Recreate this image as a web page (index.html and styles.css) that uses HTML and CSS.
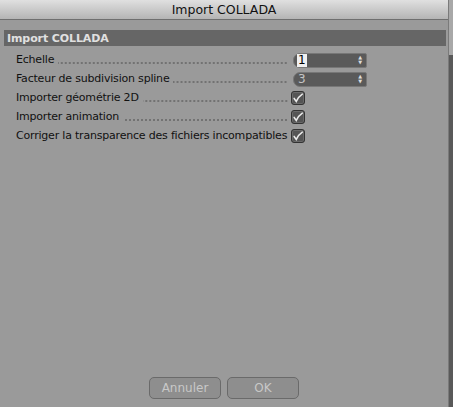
FILE: index.html
```html
<!DOCTYPE html>
<html lang="fr">
<head>
  <meta charset="UTF-8">
  <title>Import COLLADA</title>
  <link rel="stylesheet" href="styles.css">
</head>
<body>

<div class="screen">
  <div class="window">
    <div class="titlebar">Import COLLADA</div>

    <div class="content">
      <div class="group-head">Import COLLADA</div>

      <div class="rows">
        <div class="row">
          <span class="label">Echelle</span>
          <span class="dots"></span>
          <div class="spin"><span class="val sel">1</span><span class="arrows">&#9650;<br>&#9660;</span></div>
        </div>
        <div class="row">
          <span class="label">Facteur de subdivision spline</span>
          <span class="dots"></span>
          <div class="spin"><span class="val">3</span><span class="arrows">&#9650;<br>&#9660;</span></div>
        </div>
        <div class="row">
          <span class="label">Importer géométrie 2D</span>
          <span class="dots"></span>
          <span class="check"><svg viewBox="0 0 14 14" width="12" height="12"><path d="M2.5 7.5 L5 11 Q7.5 5.5 12 2.5" fill="none" stroke="#ececec" stroke-width="1.8" stroke-linecap="round"/></svg></span>
        </div>
        <div class="row">
          <span class="label">Importer animation</span>
          <span class="dots"></span>
          <span class="check"><svg viewBox="0 0 14 14" width="12" height="12"><path d="M2.5 7.5 L5 11 Q7.5 5.5 12 2.5" fill="none" stroke="#ececec" stroke-width="1.8" stroke-linecap="round"/></svg></span>
        </div>
        <div class="row">
          <span class="label">Corriger la transparence des fichiers incompatibles</span>
          <span class="dots none"></span>
          <span class="check"><svg viewBox="0 0 14 14" width="12" height="12"><path d="M2.5 7.5 L5 11 Q7.5 5.5 12 2.5" fill="none" stroke="#ececec" stroke-width="1.8" stroke-linecap="round"/></svg></span>
        </div>
      </div>

      <div class="buttons">
        <button class="btn">Annuler</button>
        <button class="btn">OK</button>
      </div>
    </div>
  </div>
  <div class="side">
    <div class="side-top"></div>
    <div class="side-bottom"></div>
  </div>
</div>

</body>
</html>
```

FILE: styles.css
```css
html, body {
  margin: 0;
  padding: 0;
}
body {
  font-family: "DejaVu Sans", sans-serif;
  font-size: 11px;
  color: #111;
  background: #9a9a9a;
}
.screen {
  display: flex;
  width: 453px;
  height: 407px;
  overflow: hidden;
}
.window {
  width: 448px;
  display: flex;
  flex-direction: column;
  background: #9a9a9a;
  border-right: 1px solid #7a7a7a;
}
.titlebar {
  height: 19px;
  line-height: 19px;
  text-align: center;
  font-size: 12.5px;
  color: #111;
  background: linear-gradient(#e0e0e0, #b4b4b4);
  border-bottom: 1px solid #6e6e6e;
}
.content {
  flex: 1;
  display: flex;
  flex-direction: column;
  padding: 10px 2px 0 4px;
}
.group-head {
  height: 16px;
  line-height: 17px;
  background: #666;
  color: #e0e0e0;
  font-weight: bold;
  font-size: 11px;
  letter-spacing: -0.1px;
  padding-left: 3px;
}
.rows {
  padding: 4px 0 0 12px;
}
.row {
  display: grid;
  grid-template-columns: auto 1fr 80px;
  align-items: center;
  height: 19px;
  width: 355px;
}
.label {
  white-space: nowrap;
  letter-spacing: -0.2px;
}
.dots {
  height: 2px;
  margin: 7px 3px 0 4px;
  background-image: radial-gradient(circle, #444 0.6px, transparent 0.8px);
  background-size: 4px 2px;
  background-repeat: repeat-x;
  background-position: right;
}
.dots.none {
  background: none;
  margin: 0 2px;
}
.spin {
  width: 74px;
  height: 15px;
  margin-left: 2px;
  background: #5a5a5a;
  border: 1px solid #777;
  border-radius: 7px 2px 2px 7px;
  display: flex;
  align-items: center;
  justify-content: space-between;
  box-sizing: border-box;
  margin-top: 1px;
}
.val {
  margin-left: 3px;
  color: #c4c4c4;
  font-size: 12px;
  line-height: 13px;
  padding: 0 1px;
}
.val.sel {
  background: #f0f0f0;
  color: #000;
}
.arrows {
  font-size: 5px;
  line-height: 5px;
  color: #ddd;
  margin-right: 4px;
  text-align: center;
}
.check {
  width: 12px;
  height: 12px;
  background: #555;
  border: 1px solid #333;
  box-shadow: inset 0 0 0 1px #6a6a6a;
  border-radius: 3px;
  display: flex;
}
.buttons {
  margin-top: auto;
  margin-bottom: 8px;
  display: flex;
  justify-content: center;
  gap: 6px;
  padding-right: 2px;
}
.btn {
  width: 72px;
  height: 22px;
  font-family: "DejaVu Sans", sans-serif;
  font-size: 12px;
  color: #c8c8c8;
  background: #8e8e8e;
  border: 1px solid #6a6a6a;
  border-radius: 5px;
}
.side {
  flex: 1;
  display: flex;
  flex-direction: column;
}
.side-top {
  height: 55px;
  background: #a8a8a8;
}
.side-bottom {
  flex: 1;
  background: #595959;
}
```
